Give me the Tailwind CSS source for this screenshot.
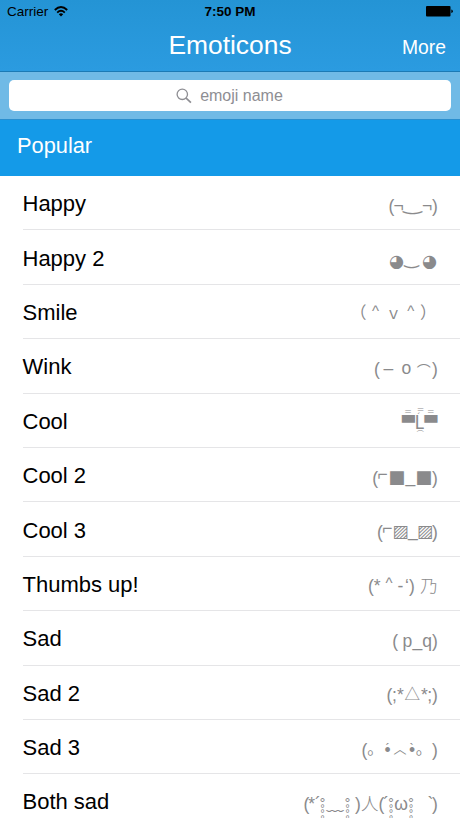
<!DOCTYPE html>
<html lang="en">
<head>
<meta charset="utf-8">
<meta name="viewport" content="width=device-width, initial-scale=1">
<title>Emoticons</title>
<script src="https://cdn.jsdelivr.net/npm/@tailwindcss/browser@4"></script>
</head>
<body class="bg-white font-['Liberation_Sans',Arial,sans-serif] text-black">
<main class="flex h-[818px] w-[460px] flex-col overflow-hidden bg-white">
  <header class="flex h-[72px] shrink-0 flex-col border-b border-[#1b7ab5] bg-linear-to-b from-[#2494d5] to-[#2b9be0]">
    <div class="grid h-6 grid-cols-3 items-center pl-[7px] pr-[7px] text-[13.5px]">
      <div class="flex items-center gap-[6px]">
        <span>Carrier</span>
        <svg class="-mt-[2px] h-[11px] w-[14px]" viewBox="0 0 14 11" fill="none" stroke="#000" stroke-width="1.9"><path d="M.8 4Q7-1.8 13.2 4M3.2 6.6Q7 3 10.8 6.6"/><path d="M4.8 8.2Q7 6.4 9.2 8.2L7 10.6Z" fill="#000" stroke="none"/></svg>
      </div>
      <span class="text-center font-bold">7:50 PM</span>
      <svg class="-mt-[1px] h-[11px] w-[27px] justify-self-end" viewBox="0 0 27 11"><rect width="24.5" height="10.5" rx="1"/><path d="M25.3 3.5q1.5.3 1.5 1.8t-1.5 1.8z"/></svg>
    </div>
    <div class="grid h-[47px] grid-cols-[1fr_auto_1fr] items-center text-white">
      <span></span>
      <h1 class="pb-[5px] text-[26.4px] leading-none">Emoticons</h1>
      <span class="justify-self-end pr-[14px] text-[19.3px] leading-none">More</span>
    </div>
  </header>
  <div class="flex h-[48px] shrink-0 items-center border-b border-[#2a8fcf] bg-[#70bae6] px-[9px]">
    <div class="flex h-[31px] w-full items-center justify-center gap-[8px] rounded-[5px] bg-white text-[16px] text-[#8e8e93]">
      <svg class="size-[16px]" viewBox="0 0 16 16" fill="none" stroke="#8e8e93" stroke-width="1.3"><circle cx="6.3" cy="6.3" r="5.2"/><path d="M10.1 10.1l4.8 4.6" stroke-width="1.7"/></svg>
      <span class="pr-[1px]">emoji name</span>
    </div>
  </div>
  <h2 class="flex h-[56px] shrink-0 items-center bg-[#149ae8] pb-[4px] pl-[17px] text-[21.8px] text-white">Popular</h2>
  <ul class="flex flex-col pl-[22.5px] text-[22px]">
    <li class="flex h-[54.4px] shrink-0 items-center justify-between border-b border-[#e5e5e7]"><span class="pt-[2px]">Happy</span>
      <svg class="h-[54px] w-[170px] shrink-0 overflow-visible fill-[#8a8a8c] text-[17.5px]" viewBox="290 0 170 54"><text y="35.5"><tspan x="388.5">(</tspan><tspan x="393.5">¬</tspan><tspan class="font-['DejaVu_Sans']" x="403.5" y="33.5" textLength="18" lengthAdjust="spacingAndGlyphs">‿</tspan><tspan x="422" y="35.5">¬</tspan><tspan x="432">)</tspan></text></svg></li>
    <li class="flex h-[54.4px] shrink-0 items-center justify-between border-b border-[#e5e5e7]"><span class="pt-[2px]">Happy 2</span>
      <svg class="h-[54px] w-[170px] shrink-0 overflow-visible fill-[#8a8a8c] font-['DejaVu_Sans'] text-[17.5px]" viewBox="290 0 170 54"><text y="37"><tspan x="389">◕</tspan><tspan x="404.5" y="33.5">‿</tspan><tspan x="422" y="37">◕</tspan></text></svg></li>
    <li class="flex h-[54.4px] shrink-0 items-center justify-between border-b border-[#e5e5e7]"><span class="pt-[2px]">Smile</span>
      <svg class="h-[54px] w-[170px] shrink-0 overflow-visible fill-[#8a8a8c] font-['Noto_Sans_CJK_JP'] text-[16.5px]" viewBox="290 0 170 54"><text y="35"><tspan x="350">（</tspan><tspan class="font-['Liberation_Sans'] text-[15px]" x="372" y="31.5">^</tspan><tspan class="text-[15.5px]" x="385.7" y="34.5">ｖ</tspan><tspan class="font-['Liberation_Sans'] text-[15px]" x="407.3" y="31.5">^</tspan><tspan x="420" y="35">）</tspan></text></svg></li>
    <li class="flex h-[54.4px] shrink-0 items-center justify-between border-b border-[#e5e5e7]"><span class="pt-[2px]">Wink</span>
      <svg class="h-[54px] w-[170px] shrink-0 overflow-visible fill-[#8a8a8c] text-[17.5px]" viewBox="290 0 170 54"><text y="35.5"><tspan x="374">(</tspan><tspan x="383.6" y="35">–</tspan><tspan x="401.4" y="35">o</tspan><tspan class="font-['Noto_Sans_CJK_JP'] text-[14px]" x="416.8" y="36.5">⌒</tspan><tspan x="432" y="35.5">)</tspan></text></svg></li>
    <li class="flex h-[54.4px] shrink-0 items-center justify-between border-b border-[#e5e5e7]"><span class="pt-[2px]">Cool</span>
      <svg class="h-[54px] w-[170px] shrink-0 overflow-visible fill-[#8a8a8c] font-['DejaVu_Sans'] text-[13px]" viewBox="290 0 170 54"><text x="402" y="34.3" textLength="12.8" lengthAdjust="spacingAndGlyphs">▀</text><text x="424.4" y="34.3" textLength="12.8" lengthAdjust="spacingAndGlyphs">▀</text><text><tspan class="text-[9px]" x="404.3 416.7 427.1" y="20.5 19.3 20.5">===</tspan><tspan class="font-['Noto_Sans_CJK_JP'] text-[18px]" x="414.6" y="35.5">L</tspan><tspan class="text-[9px]" x="416" y="27">´</tspan><tspan class="text-[7px] font-['Noto_Sans_CJK_JP']" x="416.7" y="43">⌒</tspan></text></svg></li>
    <li class="flex h-[54.4px] shrink-0 items-center justify-between border-b border-[#e5e5e7]"><span class="pt-[2px]">Cool 2</span>
      <svg class="h-[54px] w-[170px] shrink-0 overflow-visible fill-[#8a8a8c] text-[17.5px]" viewBox="290 0 170 54"><text y="35.5"><tspan x="372.3">(</tspan><tspan x="377.5" y="31.5">⌐</tspan><tspan class="font-['DejaVu_Sans'] text-[18px]" x="388.3" y="35">■</tspan><tspan x="405.5" y="34">_</tspan><tspan class="font-['DejaVu_Sans'] text-[18px]" x="415.3" y="35">■</tspan><tspan x="432" y="35.5">)</tspan></text></svg></li>
    <li class="flex h-[54.4px] shrink-0 items-center justify-between border-b border-[#e5e5e7]"><span class="pt-[2px]">Cool 3</span>
      <svg class="h-[54px] w-[170px] shrink-0 overflow-visible fill-[#8a8a8c] text-[17.5px]" viewBox="290 0 170 54"><text y="35.5"><tspan x="377">(</tspan><tspan x="382.2" y="31.5">⌐</tspan><tspan class="font-['DejaVu_Sans']" x="392.3" y="35">▨</tspan><tspan x="408" y="34">_</tspan><tspan class="font-['DejaVu_Sans']" x="416.8" y="35">▨</tspan><tspan x="432" y="35.5">)</tspan></text></svg></li>
    <li class="flex h-[54.4px] shrink-0 items-center justify-between border-b border-[#e5e5e7]"><span class="pt-[2px]">Thumbs up!</span>
      <svg class="h-[54px] w-[170px] shrink-0 overflow-visible fill-[#8a8a8c] text-[17.5px]" viewBox="290 0 170 54"><text y="35.5"><tspan x="368 373.8">(*</tspan><tspan class="text-[15px]" x="385.4" y="31.5">^</tspan><tspan x="397.5 405 409" y="35.5">-‘)</tspan><tspan class="font-['Noto_Sans_CJK_JP'] font-light" x="420">乃</tspan></text></svg></li>
    <li class="flex h-[54.4px] shrink-0 items-center justify-between border-b border-[#e5e5e7]"><span class="pt-[2px]">Sad</span>
      <svg class="h-[54px] w-[170px] shrink-0 overflow-visible fill-[#8a8a8c] text-[17.5px]" viewBox="290 0 170 54"><text x="392.3 402.4 412.5 422.3 432" y="35.5 35.5 34.5 35.5 35.5">(p_q)</text></svg></li>
    <li class="flex h-[54.4px] shrink-0 items-center justify-between border-b border-[#e5e5e7]"><span class="pt-[2px]">Sad 2</span>
      <svg class="h-[54px] w-[170px] shrink-0 overflow-visible fill-[#8a8a8c] text-[17.5px]" viewBox="290 0 170 54"><text y="35.5"><tspan x="386.5 392 397">(;*</tspan><tspan class="font-['Noto_Sans_CJK_JP'] text-[15.5px]" x="404.5" y="35">△</tspan><tspan x="421 427.3 432" y="35.5">*;)</tspan></text></svg></li>
    <li class="flex h-[54.4px] shrink-0 items-center justify-between border-b border-[#e5e5e7]"><span class="pt-[2px]">Sad 3</span>
      <svg class="h-[54px] w-[170px] shrink-0 overflow-visible fill-[#8a8a8c] text-[17.5px]" viewBox="290 0 170 54"><text y="35.5"><tspan x="361.5">(</tspan><tspan class="font-['Noto_Sans_CJK_JP'] text-[16px]" x="367.2" y="33.5">。</tspan><tspan x="384.5" y="35.5">•</tspan><tspan class="text-[13px]" x="385.5" y="32.5">´</tspan><tspan class="font-['Noto_Sans_CJK_JP'] text-[13px]" x="393.5" y="33">︿</tspan><tspan x="409" y="35.5">•</tspan><tspan class="text-[13px]" x="409.5" y="32.5">`</tspan><tspan class="font-['Noto_Sans_CJK_JP'] text-[16px]" x="415.7" y="33.5">。</tspan><tspan x="432" y="35.5">)</tspan></text></svg></li>
    <li class="flex h-[54.4px] shrink-0 items-center justify-between border-b border-[#e5e5e7]"><span class="pt-[2px]">Both sad</span>
      <svg class="h-[54px] w-[170px] shrink-0 overflow-visible fill-[#8a8a8c] text-[17.5px]" viewBox="290 0 170 54"><text y="35.5"><tspan x="303.5 308.3 315">(*´</tspan><tspan class="font-['Noto_Sans_CJK_JP']" x="326.3">﹏</tspan><tspan x="355">)</tspan><tspan class="font-['Noto_Sans_CJK_JP'] font-light" x="361">人</tspan><tspan x="378.5 383.3 394.3 427.5 432">(´ω`)</tspan></text>
        <text class="font-['DejaVu_Sans'] text-[13px]" x="319.3 344.3 387.8 407.8" y="33 33 33 33">°°°°</text>
        <text class="font-['DejaVu_Sans'] text-[10px]" x="320 320 320 345 345 345 388.5 388.5 388.5 408.5 408.5 408.5" y="38 43.3 48.6 38 43.3 48.6 38 43.3 48.6 38 43.3 48.6">°°°°°°°°°°°°</text></svg></li>
  </ul>
</main>
</body>
</html>
